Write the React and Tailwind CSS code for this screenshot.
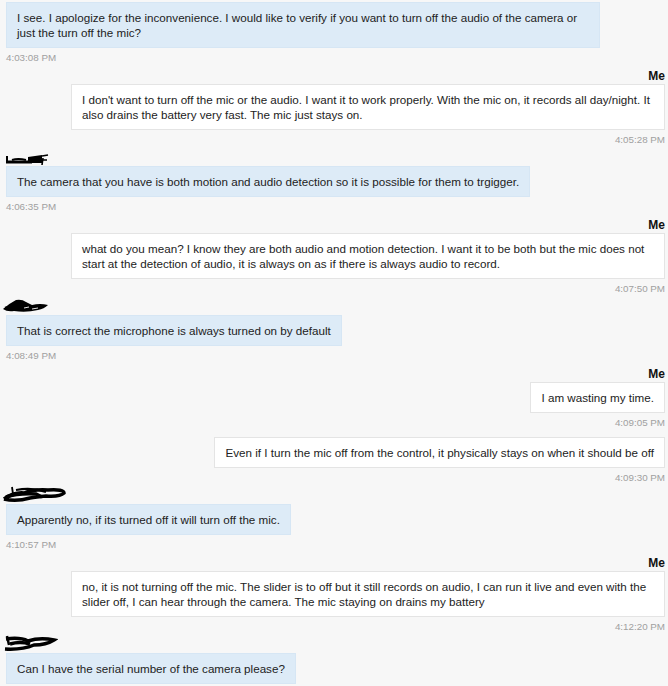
const messages = [
  { from: 'agent', noHeader: true, text: 'I see. I apologize for the inconvenience. I would like to verify if you want to turn off the audio of the camera or just the turn off the mic?', time: '4:03:08 PM' },
  { from: 'me', text: "I don't want to turn off the mic or the audio. I want it to work properly. With the mic on, it records all day/night. It also drains the battery very fast. The mic just stays on.", time: '4:05:28 PM' },
  { from: 'agent', scribble: 0, text: 'The camera that you have is both motion and audio detection so it is possible for them to trgigger.', time: '4:06:35 PM' },
  { from: 'me', text: 'what do you mean? I know they are both audio and motion detection. I want it to be both but the mic does not start at the detection of audio, it is always on as if there is always audio to record.', time: '4:07:50 PM' },
  { from: 'agent', scribble: 1, text: 'That is correct the microphone is always turned on by default', time: '4:08:49 PM' },
  { from: 'me', text: 'I am wasting my time.', time: '4:09:05 PM' },
  { from: 'me', noHeader: true, text: 'Even if I turn the mic off from the control, it physically stays on when it should be off', time: '4:09:30 PM' },
  { from: 'agent', scribble: 2, text: 'Apparently no, if its turned off it will turn off the mic.', time: '4:10:57 PM' },
  { from: 'me', text: 'no, it is not turning off the mic. The slider is to off but it still records on audio, I can run it live and even with the slider off, I can hear through the camera. The mic staying on drains my battery', time: '4:12:20 PM' },
  { from: 'agent', scribble: 3, text: 'Can I have the serial number of the camera please?', time: null },
];

// redacted agent names, hand-scribbled over
function Scribble({ kind }) {
  if (kind === 0) {
    return (
      <svg width="48" height="16" viewBox="0 0 48 16" className="block">
        <path d="M5 6 L5 13" stroke="#000" strokeWidth="2" />
        <path d="M4 12 L30 12" stroke="#000" strokeWidth="3" />
        <path d="M10 10 Q16 8 24 10" stroke="#000" strokeWidth="2" fill="none" />
        <path d="M26 7 L40 5 L40 13 L26 13 Z" fill="#000" />
        <path d="M40 6 L46 5 M41 8 L40 15 M41 10 L45 10" stroke="#000" strokeWidth="1.6" fill="none" />
      </svg>
    );
  }
  if (kind === 1) {
    return (
      <svg width="48" height="18" viewBox="0 0 48 18" className="block">
        <path d="M1 12 Q8 6 14 3 Q20 2 24 5 L30 8 Q38 6 46 8 Q42 12 36 13 Q24 16 12 14 Q5 15 1 12 Z" fill="#000" />
        <path d="M3 11 L14 9" stroke="#000" strokeWidth="2.5" />
        <path d="M22 11 L27 10 M30 12 L36 11" stroke="#fff" strokeWidth="0.9" />
      </svg>
    );
  }
  if (kind === 2) {
    return (
      <svg width="66" height="20" viewBox="0 0 66 20" className="block">
        <path d="M10 3 L11 10" stroke="#000" strokeWidth="1.8" />
        <path d="M2 15 Q12 8 22 9 Q32 5 46 6 Q62 5 62 9 Q58 13 44 12 Q34 13 28 14 Q14 18 2 15" stroke="#000" strokeWidth="3.5" fill="none" />
        <path d="M4 13 Q16 9 34 10 L40 13" stroke="#000" strokeWidth="3.5" fill="none" />
        <path d="M14 6 Q30 3 44 8" stroke="#000" strokeWidth="2" fill="none" />
      </svg>
    );
  }
  return (
    <svg width="56" height="20" viewBox="0 0 56 20" className="block">
      <path d="M5 3 L7 12" stroke="#000" strokeWidth="2.5" />
      <path d="M4 6 Q18 4 26 8 Q38 4 52 7 Q44 12 32 12 Q20 17 3 16" stroke="#000" strokeWidth="3.5" fill="none" />
      <path d="M8 11 Q18 8 28 11" stroke="#000" strokeWidth="3.5" fill="none" />
    </svg>
  );
}

function Message({ m }) {
  const mine = m.from === 'me';
  return (
    <div className={`flex flex-col ${mine ? 'items-end' : 'items-start'} ${m.noHeader ? 'mt-[8px]' : 'mt-[5px]'} first:mt-0`}>
      {!m.noHeader &&
        (mine ? (
          <div className="h-[15px] text-[12px] leading-[15px] font-bold text-[#111]">Me</div>
        ) : (
          <div className="h-[15px] -ml-[4px] flex items-end">
            <Scribble kind={m.scribble} />
          </div>
        ))}
      <div
        className={`max-w-[594px] px-[10px] py-[7px] text-[11.65px] leading-[15px] text-[#222] border ${
          mine ? 'bg-white border-[#e4e4e4]' : 'bg-[#ddebf7] border-[#d6e6f4]'
        }`}
      >
        {m.text}
      </div>
      {m.time && (
        <div className="mt-[4px] h-[12px] text-[9.8px] leading-[12px] text-[#a0a0a0]">{m.time}</div>
      )}
    </div>
  );
}

export default function App() {
  return (
    <div
      className="w-[668px] h-[686px] overflow-hidden bg-[#f7f7f7] pt-[2px] pl-[6px] pr-[3px]"
      style={{ fontFamily: '"Liberation Sans", Arial, sans-serif' }}
    >
      {messages.map((m, i) => (
        <Message key={i} m={m} />
      ))}
    </div>
  );
}
